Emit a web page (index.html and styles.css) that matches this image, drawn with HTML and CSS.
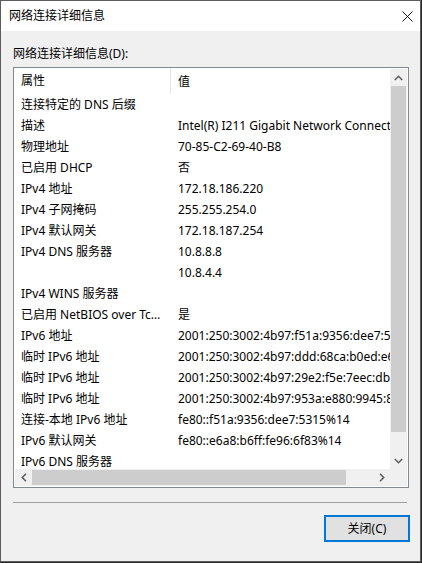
FILE: index.html
```html
<!DOCTYPE html>
<html lang="zh-CN">
<head>
<meta charset="utf-8">
<title>网络连接详细信息</title>
<link rel="stylesheet" href="styles.css">
</head>
<body>
<div class="window">
  <div class="titlebar">
    <span class="title">网络连接详细信息</span>
    <svg class="close" width="12" height="12" viewBox="0 0 12 12"><path d="M0.5 0.5 L11.5 11.5 M11.5 0.5 L0.5 11.5" stroke="#000" stroke-width="1" fill="none"/></svg>
  </div>
  <div class="body">
    <div class="label">网络连接详细信息(D):</div>
    <div class="listbox">
      <div class="viewport">
        <div class="row header"><div class="c1 hc1">属性</div><div class="c2">值</div></div>
        <div class="row"><div class="c1">连接特定的 DNS 后缀</div><div class="c2"></div></div>
        <div class="row"><div class="c1">描述</div><div class="c2">Intel(R) I211 Gigabit Network Connection</div></div>
        <div class="row"><div class="c1">物理地址</div><div class="c2">70-85-C2-69-40-B8</div></div>
        <div class="row"><div class="c1">已启用 DHCP</div><div class="c2">否</div></div>
        <div class="row"><div class="c1">IPv4 地址</div><div class="c2">172.18.186.220</div></div>
        <div class="row"><div class="c1">IPv4 子网掩码</div><div class="c2">255.255.254.0</div></div>
        <div class="row"><div class="c1">IPv4 默认网关</div><div class="c2">172.18.187.254</div></div>
        <div class="row"><div class="c1">IPv4 DNS 服务器</div><div class="c2">10.8.8.8</div></div>
        <div class="row"><div class="c1"></div><div class="c2">10.8.4.4</div></div>
        <div class="row"><div class="c1">IPv4 WINS 服务器</div><div class="c2"></div></div>
        <div class="row"><div class="c1">已启用 NetBIOS over Tcpip</div><div class="c2">是</div></div>
        <div class="row"><div class="c1">IPv6 地址</div><div class="c2">2001:250:3002:4b97:f51a:9356:dee7:5315</div></div>
        <div class="row"><div class="c1">临时 IPv6 地址</div><div class="c2">2001:250:3002:4b97:ddd:68ca:b0ed:e6b1</div></div>
        <div class="row"><div class="c1">临时 IPv6 地址</div><div class="c2">2001:250:3002:4b97:29e2:f5e:7eec:dbd1</div></div>
        <div class="row"><div class="c1">临时 IPv6 地址</div><div class="c2">2001:250:3002:4b97:953a:e880:9945:8c2d</div></div>
        <div class="row"><div class="c1">连接-本地 IPv6 地址</div><div class="c2">fe80::f51a:9356:dee7:5315%14</div></div>
        <div class="row"><div class="c1">IPv6 默认网关</div><div class="c2">fe80::e6a8:b6ff:fe96:6f83%14</div></div>
        <div class="row"><div class="c1">IPv6 DNS 服务器</div><div class="c2"></div></div>
      </div>
      <div class="vscroll">
        <div class="sbtn"><svg width="9" height="6" viewBox="0 0 9 6"><path d="M0.8 5 L4.5 1.3 L8.2 5" stroke="#606060" stroke-width="1.6" fill="none"/></svg></div>
        <div class="vthumb"></div>
        <div class="vtrack"></div>
        <div class="sbtn"><svg width="9" height="6" viewBox="0 0 9 6"><path d="M0.8 1 L4.5 4.7 L8.2 1" stroke="#606060" stroke-width="1.6" fill="none"/></svg></div>
      </div>
      <div class="hscroll">
        <div class="sbtn"><svg width="6" height="9" viewBox="0 0 6 9"><path d="M5 0.8 L1.3 4.5 L5 8.2" stroke="#606060" stroke-width="1.6" fill="none"/></svg></div>
        <div class="hthumb"></div>
        <div class="htrack"></div>
        <div class="sbtn"><svg width="6" height="9" viewBox="0 0 6 9"><path d="M1 0.8 L4.7 4.5 L1 8.2" stroke="#606060" stroke-width="1.6" fill="none"/></svg></div>
      </div>
      <div class="corner"></div>
    </div>
    <div class="sep"></div>
    <div class="footer"><button class="btn">关闭(C)</button></div>
  </div>
</div>
</body>
</html>
```
FILE: styles.css
```css
html, body {
  margin: 0;
  padding: 0;
}
body {
  background: #2b2b2b;
  width: 422px;
  height: 563px;
  overflow: hidden;
  font-family: "Noto Sans", "Noto Sans CJK SC", sans-serif;
  font-size: 12px;
  color: #000;
}
.window {
  box-sizing: border-box;
  width: 421px;
  height: 562px;
  border: 1px solid #5c5c5c;
  background: #f0f0f0;
  display: flex;
  flex-direction: column;
}
.titlebar {
  height: 30px;
  background: #fff;
  display: flex;
  align-items: center;
  justify-content: space-between;
  padding: 0 8px 0 8px;
  flex: none;
}
.title {
  line-height: 16px;
  margin-top: -1px;
}
.close {
  display: block;
  margin-right: -1px;
  margin-top: 0px;
  width: 11px;
  height: 11px;
}
.body {
  padding: 0 11px 0 12px;
  display: flex;
  flex-direction: column;
}
.label {
  line-height: 16px;
  margin-top: 15px;
  height: 16px;
}
.listbox {
  margin-top: 5px;
  box-sizing: border-box;
  width: 396px;
  height: 421px;
  border: 1px solid #828790;
  padding: 1px;
  background: #fff;
  display: grid;
  grid-template-columns: 375px 17px;
  grid-template-rows: 400px 17px;
}
.viewport {
  overflow: hidden;
  background: #fff;
}
.row {
  display: flex;
  height: 21px;
  align-items: center;
  white-space: nowrap;
}
.row.header {
  height: 25px;
}
.c1 {
  box-sizing: border-box;
  width: 156px;
  flex: none;
  padding-left: 6px;
  padding-right: 4px;
  overflow: hidden;
  text-overflow: ellipsis;
  line-height: 16px;
}
.hc1 {
  border-right: 1px solid #e5e5e5;
  height: 25px;
  line-height: 24px;
}
.c2 {
  padding-left: 7px;
  line-height: 16px;
  flex: none;
}
.vscroll {
  background: #f0f0f0;
  display: flex;
  flex-direction: column;
}
.hscroll {
  background: #f0f0f0;
  display: flex;
}
.corner {
  background: #f0f0f0;
}
.sbtn {
  width: 17px;
  height: 17px;
  flex: none;
  display: flex;
  align-items: center;
  justify-content: center;
}
.sbtn svg {
  display: block;
}
.vthumb {
  height: 346px;
  margin: 0 1px;
  background: #cdcdcd;
  flex: none;
}
.vtrack {
  flex: 1;
}
.hthumb {
  width: 314px;
  margin: 1px 0;
  background: #cdcdcd;
  flex: none;
}
.htrack {
  flex: 1;
}
.sep {
  margin-top: 14px;
  height: 1px;
  width: 394px;
  background: #a0a0a0;
}
.footer {
  display: flex;
  justify-content: flex-end;
  margin-top: 12px;
  margin-right: -1px;
}
.btn {
  box-sizing: border-box;
  width: 86px;
  height: 27px;
  border: 2px solid #0078d7;
  background: #e1e1e1;
  font-family: "Noto Sans", "Noto Sans CJK SC", sans-serif;
  font-size: 12px;
  color: #000;
  padding: 0;
  line-height: 16px;
  margin: 0;
}
```
